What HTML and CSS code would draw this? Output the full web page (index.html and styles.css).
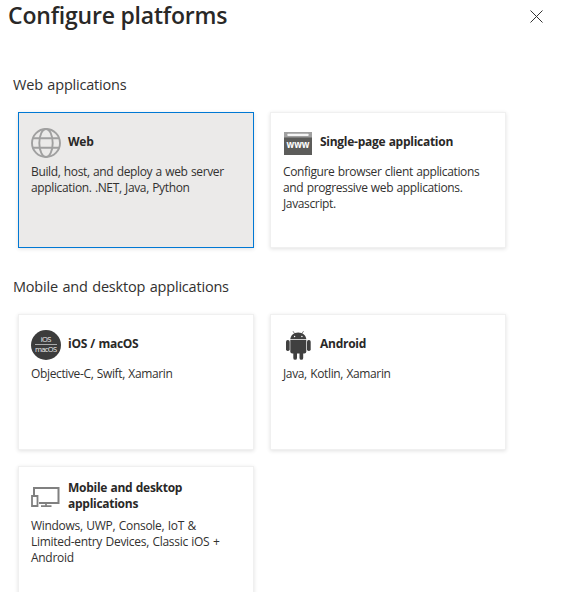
FILE: index.html
```html
<!DOCTYPE html>
<html lang="en">
<head>
<meta charset="utf-8">
<title>Configure platforms</title>
<link rel="stylesheet" href="styles.css">
</head>
<body>
<main class="panel">
  <header class="panel-header">
    <h1>Configure platforms</h1>
    <button class="close" aria-label="Close">
      <svg width="13" height="13" viewBox="0 0 13 13"><path d="M.5 .5 12.5 12.5M12.5 .5 .5 12.5" stroke="#333" stroke-width="1" fill="none"/></svg>
    </button>
  </header>

  <section class="group">
    <h2>Web applications</h2>
    <div class="cards">
      <article class="card selected">
        <div class="card-head">
          <svg class="icon" viewBox="0 0 30 30" fill="none" stroke="#a0a0a0" stroke-width="1.9"><circle cx="15" cy="15" r="14"/><ellipse cx="15" cy="15" rx="6.7" ry="14"/><path d="M2 10.3H28M2 19.8H28"/></svg>
          <h3>Web</h3>
        </div>
        <p>Build, host, and deploy a web server<br>application. .NET, Java, Python</p>
      </article>
      <article class="card">
        <div class="card-head">
          <svg class="icon" viewBox="0 0 30 30"><path fill="#a0a0a0" d="M1 4h28v6H1z"/><path fill="#5c5c5a" d="M1 9.500h28V27H1z"/><rect x="4.5" y="5.700" width="21" height="2.4" rx=".5" fill="#f5f5f5"/><text class="www" x="15" y="20" text-anchor="middle" textLength="23" lengthAdjust="spacingAndGlyphs">www</text></svg>
          <h3>Single-page application</h3>
        </div>
        <p>Configure browser client applications<br>and progressive web applications.<br>Javascript.</p>
      </article>
    </div>
  </section>

  <section class="group">
    <h2>Mobile and desktop applications</h2>
    <div class="cards">
      <article class="card">
        <div class="card-head">
          <svg class="icon" viewBox="0 0 30 30"><circle cx="15" cy="15" r="15" fill="#3c3c3c"/><path d="M4 14.5H26" stroke="#aaa"/><text class="os" x="15" y="12.4" text-anchor="middle" textLength="10.5">iOS</text><text class="os" x="15" y="22.2" text-anchor="middle" textLength="22">macOS</text></svg>
          <h3>iOS / macOS</h3>
        </div>
        <p>Objective-C, Swift, Xamarin</p>
      </article>
      <article class="card">
        <div class="card-head">
          <svg class="icon" viewBox="0 0 30 30" fill="#404040"><path d="M7.3 9.2C7.5 5.6 10.5 2.5 15.2 2.5s7.9 3.1 8.1 6.7z"/><path d="M11.8 4 10 1.2M18.7 4l1.8-2.8" stroke="#555" stroke-width=".8"/><path d="M7.3 10h16v11.6a2 2 0 0 1-2 2H9.300a2 2 0 0 1-2-2z"/><rect x="3" y="10" width="3.7" height="11" rx="1.7"/><rect x="24" y="10" width="3.7" height="11" rx="1.7"/><path d="M10.300 23h3.700v5a1.850 1.850 0 0 1-3.700 0zM16.500 23h3.700v5a1.850 1.850 0 0 1-3.700 0z"/><g fill="#fff"><circle cx="11.600" cy="6.500" r=".7"/><circle cx="18.900" cy="6.500" r=".7"/></g></svg>
          <h3>Android</h3>
        </div>
        <p>Java, Kotlin, Xamarin</p>
      </article>
      <article class="card multi">
        <div class="card-head">
          <svg class="icon" viewBox="0 0 30 30" fill="none" stroke="#808080" stroke-width="2"><path d="M3 13V6H27.500V21H8"/><path d="M1 14h5.500v10H1z" stroke-width="1.800"/><path d="M15 21v3M10 24.200h10.500" stroke-width="1.700"/></svg>
          <h3>Mobile and desktop applications</h3>
        </div>
        <p>Windows, UWP, Console, IoT &amp;<br>Limited-entry Devices, Classic iOS +<br>Android</p>
      </article>
    </div>
  </section>
</main>
</body>
</html>
```
FILE: styles.css
```css
* { box-sizing: border-box; }
html, body { margin: 0; height: 592px; overflow: hidden; }
body { background: #fff; color: #323130; font-family: "Open Sans", "Noto Sans", sans-serif; }
h1, h2, h3, p { margin: 0; }
.panel { width: 561px; }
.panel-header { display: flex; justify-content: space-between; height: 72px; padding: 0 17px 0 8px; }
h1 { font-size: 23px; font-weight: 600; line-height: 32px; letter-spacing: -0.2px; color: #292827; white-space: nowrap; margin-top: -1px; }
.close { display: flex; align-items: flex-start; padding: 10px 1px 0 0; border: 0; background: none; height: 30px; }
.close svg { display: block; }
.group { height: 202px; }
h2 { height: 40px; padding: 2px 0 0 13px; font-size: 14.5px; font-weight: 400; line-height: 22px; letter-spacing: -0.2px; word-spacing: 1px; white-space: nowrap; }
.cards { display: grid; grid-template-columns: 236px 236px; gap: 16px; padding-left: 18px; }
.card { height: 136px; padding: 14px 12px 0; border: 1px solid #f0f0f0; background: #fff; box-shadow: 0 1px 4px rgba(0, 0, 0, .12); }
.card.selected { background: #ebeae9; border-color: #0078d4; }
.card-head { display: flex; align-items: center; gap: 7px; height: 32px; }
.icon { width: 30px; height: 30px; flex: none; overflow: visible; }
h3 { width: 150px; margin-top: -2px; font-size: 12px; font-weight: 700; line-height: 16px; letter-spacing: -0.27px; word-spacing: .5px; color: #292827; }
.card p { margin-top: 5px; font-size: 12px; line-height: 16px; letter-spacing: -0.36px; word-spacing: .6px; white-space: nowrap; }
.card.multi p { letter-spacing: -0.3px; word-spacing: .7px; }
.www { font-size: 10px; font-weight: 700; fill: #fff; }
.os { font-size: 7.5px; fill: #eee; }
```
